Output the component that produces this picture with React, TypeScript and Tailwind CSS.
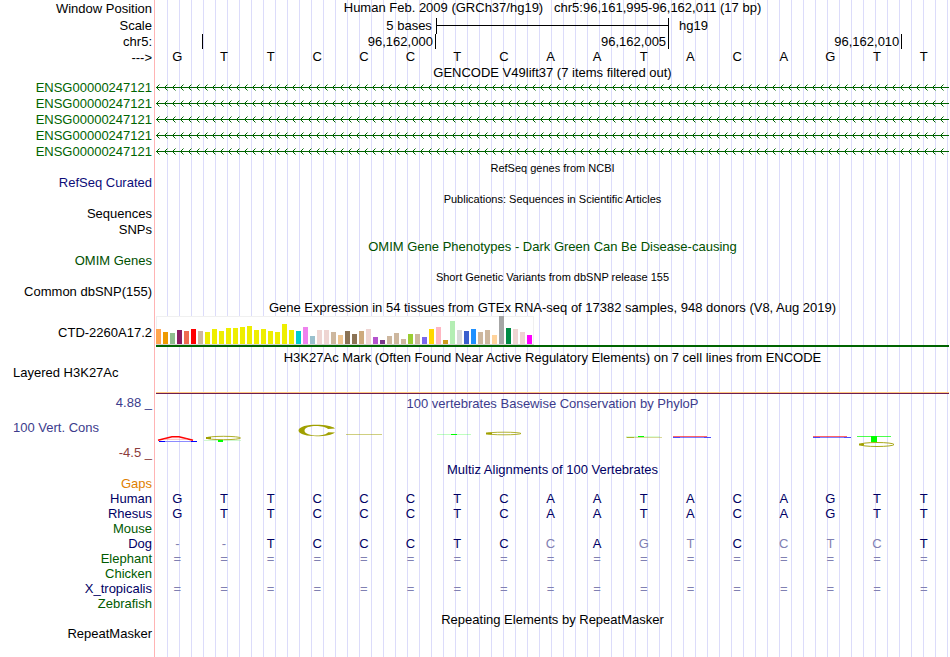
import type { ReactNode } from 'react'

const BASES = 'GTTCCCTCAATACAGTT'

const GENES = [1, 2, 3, 4, 5]

// one [height, colour] pair per GTEx tissue
const TISSUES: [number, string][] = [
  [15, '#ffa54f'], [12, '#ee9a00'], [11, '#8fbc8f'], [14, '#8b1c62'], [13, '#ee6a50'], [15, '#ff0000'],
  [13, '#cdb79e'], [12, '#eeee00'], [15, '#eeee00'], [13, '#eeee00'], [16, '#eeee00'], [16, '#eeee00'],
  [17, '#eeee00'], [18, '#eeee00'], [14, '#eeee00'], [15, '#eeee00'], [13, '#eeee00'], [12, '#eeee00'],
  [20, '#eeee00'], [14, '#eeee00'], [13, '#00cdcd'], [17, '#ee82ee'], [8, '#9ac0cd'], [14, '#eed5d2'],
  [14, '#eed5d2'], [12, '#cdb79e'], [9, '#eec591'], [13, '#8b7355'], [10, '#8b7355'], [13, '#cdaa7d'],
  [15, '#eed5d2'], [7, '#b452cd'], [4, '#7a378b'], [8, '#cdb79e'], [11, '#cdb79e'], [5, '#cdb79e'],
  [10, '#9acd32'], [10, '#cdb79e'], [7, '#7a67ee'], [15, '#ffd700'], [17, '#ffb6c1'], [4, '#cd9b1d'],
  [23, '#b4eeb4'], [14, '#d9d9d9'], [13, '#3a5fcd'], [15, '#1e90ff'], [12, '#cdb79e'], [14, '#cdb79e'],
  [9, '#ffd39b'], [28, '#a6a6a6'], [16, '#008b45'], [15, '#eed5d2'], [12, '#eed5d2'], [9, '#ff00ff'],
]

// lower case marks a base that differs from the human one
const SPECIES = [
  { name: 'Gaps', color: 'text-[#e08000]', seq: '' },
  { name: 'Human', color: 'text-[#000064]', seq: BASES },
  { name: 'Rhesus', color: 'text-[#000064]', seq: BASES },
  { name: 'Mouse', color: 'text-[#005a00]', seq: '' },
  { name: 'Dog', color: 'text-[#000064]', seq: '--TCCCTCcAgtCctcT' },
  { name: 'Elephant', color: 'text-[#005a00]', seq: '=================' },
  { name: 'Chicken', color: 'text-[#005a00]', seq: '' },
  { name: 'X_tropicalis', color: 'text-[#000064]', seq: '=================' },
  { name: 'Zebrafish', color: 'text-[#005a00]', seq: '' },
]

type RowProps = {
  label?: ReactNode
  labelClass?: string
  height: string
  children?: ReactNode
}

function Row({ label, labelClass = 'items-center justify-end', height, children }: RowProps) {
  return (
    <div className={`flex ${height}`}>
      <div className={`flex w-[154px] shrink-0 pr-0.5 ${labelClass}`}>{label}</div>
      <div className="min-w-0 flex-1 border-l border-[#ffb4b4] pl-px">
        <div className="h-full bg-[repeating-linear-gradient(to_right,transparent_0px,transparent_11px,#dcdcfa_11px,#dcdcfa_12px)] pr-px">
          {children}
        </div>
      </div>
    </div>
  )
}

function Title({ height = 'h-[15px]', className = '', children }: { height?: string; className?: string; children: ReactNode }) {
  return (
    <Row height={height}>
      <h2 className={`flex h-full items-center justify-center whitespace-pre ${className}`}>{children}</h2>
    </Row>
  )
}

function Sequence({ seq, className }: { seq: string; className: string }) {
  return (
    <div className={`-ml-0.5 mr-0.5 grid grid-cols-17 text-center ${className}`}>
      {seq.split('').map((base, i) => (
        <span key={i} className={/[a-z=-]/.test(base) ? 'text-[#8080b2]' : ''}>
          {base.toUpperCase()}
        </span>
      ))}
    </div>
  )
}

function GeneLine({ id }: { id: string }) {
  return (
    <svg className="block h-4 w-full" shapeRendering="crispEdges">
      <defs>
        <pattern id={id} width="8" height="16" patternUnits="userSpaceOnUse">
          <path d="M0 7h8v1h-8z M1 6h1v1h-1z M2 5h1v1h-1z M1 8h1v1h-1z M2 9h1v1h-1z" fill="#006400" />
          <path d="M3 4h1v1h-1z M3 10h1v1h-1z" fill="#80b280" />
        </pattern>
      </defs>
      <rect width="100%" height="16" fill={`url(#${id})`} />
    </svg>
  )
}

function Expression() {
  return (
    <svg className="block" width="378" height="29" shapeRendering="crispEdges">
      <rect width="378" height="29" fill="#f0f0f0" />
      <rect x="1" y="1" width="376" height="27" fill="#fff" />
      <rect y="28" width="378" height="1" fill="#d3d3d3" />
      {TISSUES.map(([h, color], i) => (
        <rect key={i} x={i * 7} y={28 - h} width="5" height={h} fill={color} />
      ))}
    </svg>
  )
}

function Conservation() {
  return (
    <svg className="block h-[50px] w-full" viewBox="0 0 793 50" preserveAspectRatio="none" fill="none">
      <path d="M2 29.2L16 25.8H23L37 29.2" stroke="#f00" strokeWidth="1.5" />
      <path d="M9 28.3H31" stroke="#f88" strokeWidth="0.6" />
      <path d="M3 30.5H41" stroke="#8c8cff" />
      <path d="M3 30.5H9M35 30.5H41" stroke="#00f" />

      <ellipse cx="67.5" cy="27" rx="17" ry="1.7" stroke="#a0a000" strokeOpacity="0.85" />
      <path d="M50 27H55" stroke="#a0a000" strokeWidth="2" />
      <path d="M48 29.5H85" stroke="#a0f0a0" strokeWidth="0.5" />
      <path d="M62 29H67V31H62z" fill="#0f0" />

      <path
        d="M179 17.500C174 12.500 143 12 142.500 19.500C143 27 174 26.500 179 21.500L172 21.300C170 25.800 148.500 25.800 148.500 19.500C148.500 13.800 168 13.600 172 18z"
        fill="#a0a000"
      />

      <path d="M190 23.500H226" stroke="#a0a000" strokeOpacity="0.5" />
      <path d="M281 23.500H315" stroke="#0f0" strokeOpacity="0.25" />
      <path d="M295 23.500H301" stroke="#0f0" />

      <ellipse cx="348" cy="22.500" rx="17" ry="1.3" stroke="#a0a000" strokeOpacity="0.8" />
      <path d="M330 22.500H336" stroke="#a0a000" strokeWidth="2" />

      <path d="M470 25.500H504" stroke="#0f0" strokeOpacity="0.15" />
      <path d="M482 25.500H488" stroke="#0f0" />
      <path d="M470 26.500H506" stroke="#a0a000" strokeOpacity="0.4" />
      <path d="M471 26.500H478" stroke="#a0a000" strokeOpacity="0.7" />

      {[517, 657].map((x) => (
        <g key={x}>
          <path d={`M${x} 25.500h34`} stroke="#f00" strokeOpacity="0.6" />
          <path d={`M${x} 26.500h38`} stroke="#00f" strokeOpacity="0.5" />
          <path d={`M${x} 26.500h7m24 0h7`} stroke="#00f" strokeOpacity="0.4" />
        </g>
      ))}

      <path d="M701 25.500H735" stroke="#0f0" strokeOpacity="0.7" />
      <path d="M715 25H721V31H715z" fill="#0f0" />
      <ellipse cx="721" cy="33.500" rx="17" ry="2" stroke="#a0a000" strokeOpacity="0.9" />
      <path d="M703 33.500H708" stroke="#a0a000" strokeWidth="2" />
    </svg>
  )
}

export default function App() {
  return (
    <main className="flex min-h-screen flex-col overflow-hidden bg-white font-['Liberation_Sans',Arial,sans-serif] text-[13px] leading-4 text-black">
      <Row label="Window Position" height="h-[17px]">
        <h1 className="flex justify-center whitespace-pre">
          {'Human Feb. 2009 (GRCh37/hg19)   chr5:96,161,995-96,162,011 (17 bp)'}
        </h1>
      </Row>
      <Row label="Scale" height="h-[17px]">
        <div className="grid h-full grid-cols-17 items-center">
          <span className="col-span-6 pr-1 text-right">5 bases</span>
          <div className="col-span-5 flex h-4 items-center border-x border-black">
            <div className="h-px w-full bg-black" />
          </div>
          <span className="col-span-6 pl-2.5">hg19</span>
        </div>
      </Row>
      <Row label="chr5:" height="h-4">
        <div className="grid grid-cols-17 text-right">
          <span className="h-[15px] border-r border-black" />
          <span className="col-span-5 h-[15px] border-r border-black pr-0.5">96,162,000</span>
          <span className="col-span-5 h-[15px] border-r border-black pr-0.5">96,162,005</span>
          <span className="col-span-5 h-[15px] border-r border-black pr-0.5">96,162,010</span>
        </div>
      </Row>
      <Row label="--->" height="h-4">
        <Sequence seq={BASES} className="leading-[14px]" />
      </Row>

      <Title height="h-[14px]">GENCODE V49lift37 (7 items filtered out)</Title>
      {GENES.map((n) => (
        <Row key={n} label="ENSG00000247121" labelClass="items-center justify-end text-[#006400]" height="h-4">
          <GeneLine id={`gene-${n}`} />
        </Row>
      ))}

      <Title className="text-[11px]">RefSeq genes from NCBI</Title>
      <Row label="RefSeq Curated" labelClass="items-center justify-end text-[#0c0c78]" height="h-4" />
      <Title className="text-[11px]">Publications: Sequences in Scientific Articles</Title>
      <Row label="Sequences" height="h-4" />
      <Row label="SNPs" height="h-4" />
      <Title className="pt-0.5 text-[#005000]">OMIM Gene Phenotypes - Dark Green Can Be Disease-causing</Title>
      <Row label="OMIM Genes" labelClass="items-center justify-end text-[#005000]" height="h-4" />
      <Title className="text-[11px]">Short Genetic Variants from dbSNP release 155</Title>
      <Row label="Common dbSNP(155)" height="h-4" />

      <Title height="h-4">Gene Expression in 54 tissues from GTEx RNA-seq of 17382 samples, 948 donors (V8, Aug 2019)</Title>
      <Row label="CTD-2260A17.2" labelClass="items-center justify-end pt-0.5" height="h-[31px]">
        <Expression />
        <div className="h-0.5 bg-[#006400]" />
      </Row>

      <Title height="h-[18px]" className="pt-1">
        H3K27Ac Mark (Often Found Near Active Regulatory Elements) on 7 cell lines from ENCODE
      </Title>
      <Row label="Layered H3K27Ac" labelClass="items-start pl-[13px]" height="h-[29px]">
        <div className="flex h-full flex-col justify-end">
          <div className="h-px bg-[#ffc880]" />
          <div className="h-px bg-[#6e1e50]" />
        </div>
      </Row>

      <Row label="4.88 _" labelClass="items-center justify-end text-[#3c3c8c]" height="h-[17px]">
        <h2 className="flex h-full items-center justify-center pt-0.5 text-[#3c3c8c]">
          100 vertebrates Basewise Conservation by PhyloP
        </h2>
      </Row>
      <Row
        label={
          <>
            <span className="pl-[13px] pt-[9px] text-[#3c3c8c]">100 Vert. Cons</span>
            <span className="text-right text-[#8c3c3c]">-4.5 _</span>
          </>
        }
        labelClass="flex-col justify-between"
        height="h-[50px]"
      >
        <Conservation />
      </Row>

      <Title className="pt-0.5 text-[#000064]">Multiz Alignments of 100 Vertebrates</Title>
      {SPECIES.map(({ name, color, seq }) => (
        <Row key={name} label={name} labelClass={`items-center justify-end ${color}`} height="h-[15px]">
          <Sequence seq={seq} className="leading-[15px] text-[#000064]" />
        </Row>
      ))}

      <Title className="pt-0.5">Repeating Elements by RepeatMasker</Title>
      <Row label="RepeatMasker" height="h-4" />
      <Row height="flex-1" />
    </main>
  )
}
